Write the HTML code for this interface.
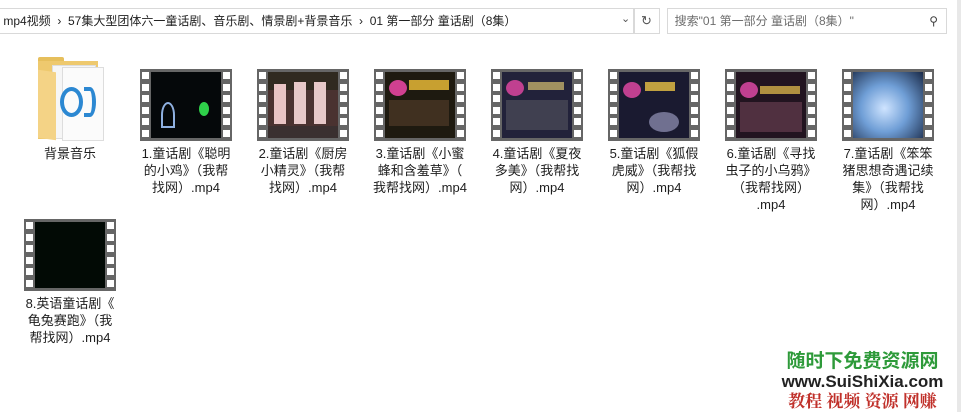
<!DOCTYPE html><html><head><meta charset="utf-8"><style>
body{margin:0;width:961px;height:412px;background:#fff;position:relative;overflow:hidden;font-family:"Liberation Sans","Noto Sans CJK SC",sans-serif;color:#1e1e1e}
.a{position:absolute}
.bar{left:-1px;top:8px;width:634px;height:24px;border:1px solid #d9d9d9;font-size:12px;line-height:24px;white-space:nowrap}
.srch{left:667px;top:8px;width:278px;height:24px;border:1px solid #d9d9d9;font-size:12px;line-height:24px;color:#6d6d6d}
.film{width:92px;height:72px;background:#666}
.h{position:absolute;width:7px;height:7px;background:#fff}
.img{position:absolute;left:11px;top:3px;width:70px;height:66px;overflow:hidden}
.t{position:absolute;width:110px;text-align:center;font-size:13px;line-height:17px}
.img i{position:absolute;display:block}
</style></head><body>
<div class="a bar">&nbsp;mp4视频 &nbsp;›&nbsp; 57集大型团体六一童话剧、音乐剧、情景剧+背景音乐 &nbsp;›&nbsp; 01 第一部分 童话剧（8集）</div>
<div class="a" style="left:621px;top:12px;font-size:11px;color:#555">⌄</div>
<div class="a" style="left:633px;top:8px;width:25px;height:24px;border:1px solid #d9d9d9;font-size:13px;line-height:24px;text-align:center;color:#555">↻</div>
<div class="a srch">&nbsp;&nbsp;搜索"01 第一部分 童话剧（8集）"<span style="position:absolute;right:8px;color:#444">⚲</span></div>
<div class="a" style="left:957px;top:0;width:4px;height:412px;background:#e8e8e8"></div>
<!-- folder -->
<div class="a" style="left:38px;top:57px;width:64px;height:84px">
<div class="a" style="left:0;top:0;width:26px;height:8px;background:#e6bf5c;border-radius:2px 2px 0 0"></div>
<div class="a" style="left:0;top:4px;width:60px;height:78px;background:#eec96e"></div>
<div class="a" style="left:14px;top:8px;width:42px;height:72px;background:#f6f6f6;border:1px solid #ddd"></div>
<div class="a" style="left:24px;top:10px;width:40px;height:72px;background:#fbfbfb;border:1px solid #ddd"></div>
<div class="a" style="left:22px;top:30px;width:15px;height:22px;border:4px solid #2c88d2;border-radius:50%"></div>
<div class="a" style="left:46px;top:30px;width:8px;height:22px;border:4px solid #2c88d2;border-left:none;border-radius:0 50% 50% 0"></div>
<div class="a" style="left:0;top:14px;width:18px;height:68px;background:#f4d386;transform:skewY(8deg)"></div>
</div>
<div class="t" style="left:15px;top:145px">背景音乐</div>
<div id="films"></div>
<div class="a" style="left:765px;top:352px;width:195px;font-weight:bold;font-size:19px;color:#2e9a3a;text-align:center;line-height:20px">随时下免费资源网</div>
<div class="a" style="left:765px;top:372px;width:195px;font-weight:bold;font-size:17px;color:#222;text-align:center;line-height:19px">www.SuiShiXia.com</div>
<div class="a" style="left:765px;top:390px;width:195px;font-weight:bold;font-size:17px;color:#c0302a;text-align:center;line-height:20px;font-family:'Noto Serif CJK SC',serif">教程 视频 资源 网赚</div>
<script>
var deco={
0:'<i style="left:10px;top:30px;width:10px;height:22px;border:2px solid #8fb0e0;border-radius:50% 50% 0 0"></i><i style="left:48px;top:30px;width:10px;height:14px;background:#2fd04a;border-radius:50%"></i>',
1:'<i style="left:0;top:0;width:70px;height:18px;background:#302a20"></i><i style="left:6px;top:12px;width:12px;height:40px;background:#e8c4c4"></i><i style="left:26px;top:10px;width:12px;height:42px;background:#e6c8c8"></i><i style="left:46px;top:10px;width:12px;height:42px;background:#e6c8c8"></i><i style="left:0;top:54px;width:70px;height:12px;background:#3a3030"></i>',
2:'<i style="left:4px;top:8px;width:18px;height:16px;background:#d04090;border-radius:50%"></i><i style="left:24px;top:8px;width:40px;height:10px;background:#c8a030"></i><i style="left:4px;top:28px;width:60px;height:26px;background:#403020"></i>',
3:'<i style="left:4px;top:8px;width:18px;height:16px;background:#c04090;border-radius:50%"></i><i style="left:26px;top:10px;width:36px;height:8px;background:#a09060"></i><i style="left:4px;top:28px;width:62px;height:30px;background:#404050"></i>',
4:'<i style="left:4px;top:10px;width:18px;height:16px;background:#c04090;border-radius:50%"></i><i style="left:26px;top:10px;width:30px;height:9px;background:#c0a040"></i><i style="left:30px;top:40px;width:30px;height:20px;background:#707090;border-radius:50%"></i>',
5:'<i style="left:4px;top:10px;width:18px;height:16px;background:#c04090;border-radius:50%"></i><i style="left:24px;top:14px;width:40px;height:8px;background:#b09040"></i><i style="left:4px;top:30px;width:62px;height:30px;background:#503040"></i>',
6:'<i style="left:0;top:0;width:70px;height:66px;background:radial-gradient(circle at 45% 55%,#cfe4ff,#6f9ed6 45%,#1a2a48)"></i>',
7:''};
var items=[[140,69,"1.童话剧《聪明<br>的小鸡》（我帮<br>找网）.mp4","#05080a"],[257,69,"2.童话剧《厨房<br>小精灵》（我帮<br>找网）.mp4","#4a3230"],[374,69,"3.童话剧《小蜜<br>蜂和含羞草》（<br>我帮找网）.mp4","#1e1a10"],[491,69,"4.童话剧《夏夜<br>多美》（我帮找<br>网）.mp4","#22223a"],[608,69,"5.童话剧《狐假<br>虎威》（我帮找<br>网）.mp4","#1a1a30"],[725,69,"6.童话剧《寻找<br>虫子的小乌鸦》<br>（我帮找网）<br>.mp4","#221420"],[842,69,"7.童话剧《笨笨<br>猪思想奇遇记续<br>集》（我帮找<br>网）.mp4","#6c9bd0"],[24,219,"8.英语童话剧《<br>龟兔赛跑》（我<br>帮找网）.mp4","#020a05"]];
var h="";items.forEach(function(it,k){var x=it[0],y=it[1];h+='<div class="a film" style="left:'+x+'px;top:'+y+'px">';for(var i=0;i<6;i++){h+='<div class="h" style="left:2px;top:'+(3+i*11.5)+'px"></div><div class="h" style="left:83px;top:'+(3+i*11.5)+'px"></div>';}h+='<div class="img" style="background:'+it[3]+'">'+deco[k]+'</div></div><div class="t" style="left:'+(x-9)+'px;top:'+(y+76)+'px">'+it[2]+'</div>';});
document.getElementById("films").innerHTML=h;
</script>
</body></html>
